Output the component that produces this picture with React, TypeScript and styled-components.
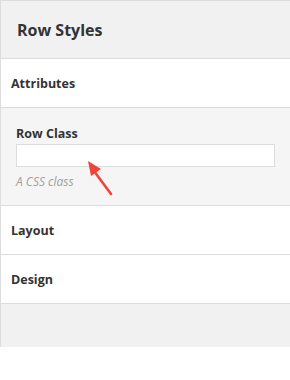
import React from "react";
import styled, { createGlobalStyle } from "styled-components";

const GlobalStyle = createGlobalStyle`
  html, body {
    margin: 0;
    padding: 0;
    background: #fff;
    font-family: "Open Sans", "Liberation Sans", sans-serif;
    color: #333;
  }
`;

const Panel = styled.div`
  width: 290px;
  box-sizing: border-box;
  border-left: 1px solid #ddd;
  border-top: 1px solid #ddd;
  background: #f1f1f1;
`;

const Header = styled.div`
  height: 57px;
  display: flex;
  align-items: center;
  padding-left: 16px;
  border-bottom: 1px solid #ddd;
  font-size: 16px;
  font-weight: 700;
  color: #333;
`;

const Row = styled.div`
  height: 48px;
  display: flex;
  align-items: center;
  padding-left: 10px;
  background: #fff;
  border-bottom: 1px solid #ddd;
  font-size: 12.5px;
  font-weight: 700;
  color: #333;
`;

const Section = styled.div`
  position: relative;
  height: 98px;
  box-sizing: border-box;
  padding: 17px 15px 0 15px;
  background: #f5f5f5;
  border-bottom: 1px solid #ddd;
  display: flex;
  flex-direction: column;
`;

const Label = styled.label`
  font-size: 12.5px;
  font-weight: 700;
  color: #333;
  line-height: 18px;
`;

const TextInput = styled.input`
  margin-top: 1px;
  width: 259px;
  height: 23px;
  box-sizing: border-box;
  border: 1px solid #ddd;
  background: #fff;
  outline: none;
`;

const Hint = styled.span`
  margin-top: 6px;
  font-size: 12px;
  font-style: italic;
  color: #a0a0a0;
`;

const Arrow = styled.svg`
  position: absolute;
  left: 82px;
  top: 49px;
`;

const Footer = styled.div`
  height: 43px;
`;

export default function App() {
  return (
    <>
      <GlobalStyle />
      <Panel>
        <Header>Row Styles</Header>
        <Row>Attributes</Row>
        <Section>
          <Label>Row Class</Label>
          <TextInput type="text" />
          <Hint>A CSS class</Hint>
          <Arrow width="32" height="42" viewBox="0 0 32 42">
            <line x1="28" y1="37" x2="11" y2="14" stroke="#f0443a" strokeWidth="2.6" strokeLinecap="round" />
            <polygon points="5,4 18,12 8,19" fill="#f0443a" />
          </Arrow>
        </Section>
        <Row>Layout</Row>
        <Row>Design</Row>
        <Footer />
      </Panel>
    </>
  );
}
